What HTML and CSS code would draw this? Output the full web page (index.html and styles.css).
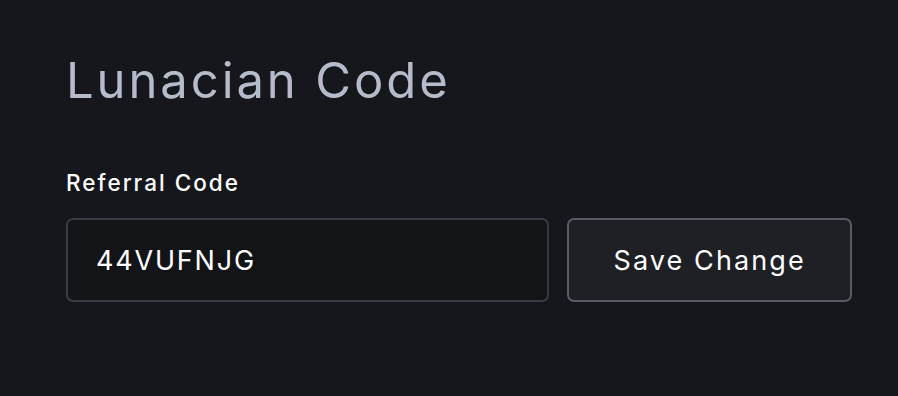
FILE: index.html
```html
<!DOCTYPE html>
<html>

<head>
	<meta charset="UTF-8">
	<title>Lunacian Code</title>
	<link rel="stylesheet" href="styles.css">
</head>

<body>
	<div class="panel">
		<h2 class="title">Lunacian Code</h2>
		<label class="label" for="code">Referral Code</label>
		<form class="row" onsubmit="event.preventDefault()">
			<input type="text" class="inputbox" id="code" value="44VUFNJG">
			<button type="submit" class="button">Save Change</button>
		</form>
	</div>
</body>

</html>
```
FILE: styles.css
```css
html {
	background-color: #16171c;
}

body {
	margin: 0;
	font-family: Inter, "Noto Sans", sans-serif;
	color: #ffffff;
}

.panel {
	padding: 52px 46px 0 66px;
}

.title {
	margin: 0;
	font-size: 49px;
	font-weight: 400;
	line-height: 58px;
	letter-spacing: 2.9px;
	color: #b5bbc8;
}

.label {
	display: block;
	margin-top: 59px;
	font-size: 22.5px;
	font-weight: 500;
	line-height: 28px;
	letter-spacing: 2px;
}

.row {
	display: flex;
	gap: 18px;
	margin-top: 21px;
}

.inputbox {
	box-sizing: border-box;
	width: 484px;
	height: 84px;
	padding: 0 0 0 28px;
	background-color: #131418;
	border: 2px solid #383b43;
	border-radius: 7px;
	color: #ffffff;
	font-family: inherit;
	font-size: 27px;
	letter-spacing: 1.8px;
	outline: none;
}

.button {
	box-sizing: border-box;
	width: 285px;
	height: 84px;
	background-color: #1f2026;
	border: 2px solid #575b65;
	border-radius: 7px;
	color: #ffffff;
	font-family: inherit;
	font-size: 27px;
	letter-spacing: 2.1px;
}
```
